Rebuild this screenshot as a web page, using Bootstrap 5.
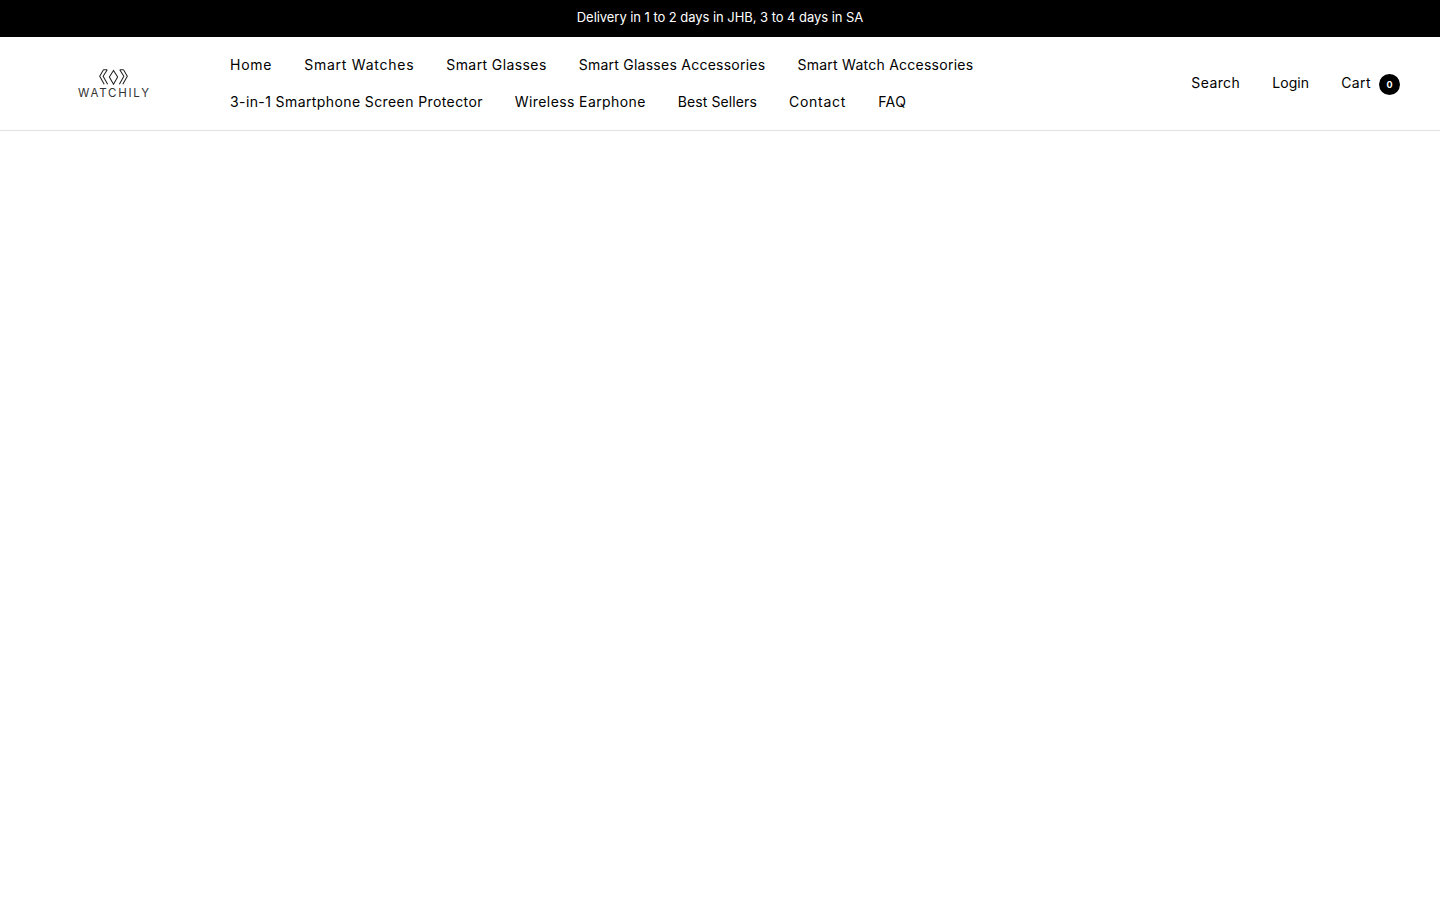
<!DOCTYPE html>
<html lang="en">
<head>
  <meta charset="UTF-8" />
  <meta name="viewport" content="width=device-width, initial-scale=1" />
  <title>Watchily</title>
  <link href="https://cdn.jsdelivr.net/npm/bootstrap@5.3.3/dist/css/bootstrap.min.css" rel="stylesheet">
  <style>
    body {
      background-color: #fff;
      color: #000;
      font-family: Inter, "Noto Sans", sans-serif;
      font-size: 14px;
      letter-spacing: 0.4px;
      min-height: 900px;
    }

    a {
      color: #000;
      text-decoration: none;
    }

    .promo-bar {
      height: 37px;
      padding-bottom: 2px;
      background-color: #000;
      color: #fff;
      font-size: 13px;
      letter-spacing: -0.05px;
    }

    .site-header {
      height: 94px;
      padding: 0 40px;
      border-bottom: 1px solid #e2e2e2;
    }

    .logo-box {
      width: 147px;
      margin-right: 43px;
    }

    .logo-name {
      font-size: 11.5px;
      line-height: 11px;
      letter-spacing: 1.75px;
      margin-right: -1.75px;
      margin-top: 3px;
      color: #333;
    }

    .main-menu {
      column-gap: 32px;
      row-gap: 0;
      width: 800px;
      padding-bottom: 2px;
    }

    .main-menu a {
      line-height: 37px;
    }

    .side-menu {
      gap: 32px;
      padding-bottom: 2px;
    }

    .track-wide {
      letter-spacing: 0.75px;
    }

    .track-mid {
      letter-spacing: 0.25px;
    }

    .track-tight {
      letter-spacing: 0.1px;
    }

    .cart-count {
      width: 21px;
      height: 21px;
      margin-left: 8px;
      margin-top: 4px;
      background-color: #000;
      color: #fff;
      font-size: 9px;
      font-weight: 700;
      letter-spacing: 0;
    }
  </style>
</head>
<body>

<div class="promo-bar d-flex align-items-center justify-content-center">Delivery in 1 to 2 days in JHB, 3 to 4 days in SA</div>

<header class="site-header d-flex align-items-center">
  <a href="#" class="logo-box d-flex flex-column align-items-center">
    <svg width="29" height="16" viewBox="0 0 84 46" fill="none" stroke="#222" stroke-width="3">
      <path d="M13 2L2 21L15 44M24 2L12 21L25 44M13 2H24"/>
      <path d="M71 2L82 21L69 44M60 2L72 21L59 44M71 2H60"/>
      <path d="M42 4L30 23L42 44L54 23Z"/>
    </svg>
    <span class="logo-name">WATCHILY</span>
  </a>

  <nav class="main-menu d-flex flex-wrap">
    <a href="#" class="track-wide">Home</a>
    <a href="#" class="track-wide">Smart Watches</a>
    <a href="#">Smart Glasses</a>
    <a href="#" class="track-mid">Smart Glasses Accessories</a>
    <a href="#" class="track-mid">Smart Watch Accessories</a>
    <a href="#">3-in-1 Smartphone Screen Protector</a>
    <a href="#">Wireless Earphone</a>
    <a href="#" class="track-tight">Best Sellers</a>
    <a href="#" class="track-wide">Contact</a>
    <a href="#">FAQ</a>
  </nav>

  <div class="side-menu d-flex align-items-center ms-auto">
    <a href="#">Search</a>
    <a href="#" class="track-tight">Login</a>
    <a href="#" class="d-flex align-items-center">Cart <span class="cart-count rounded-circle d-flex align-items-center justify-content-center">0</span></a>
  </div>
</header>

<script src="https://cdn.jsdelivr.net/npm/bootstrap@5.3.3/dist/js/bootstrap.bundle.min.js"></script>
</body>
</html>
